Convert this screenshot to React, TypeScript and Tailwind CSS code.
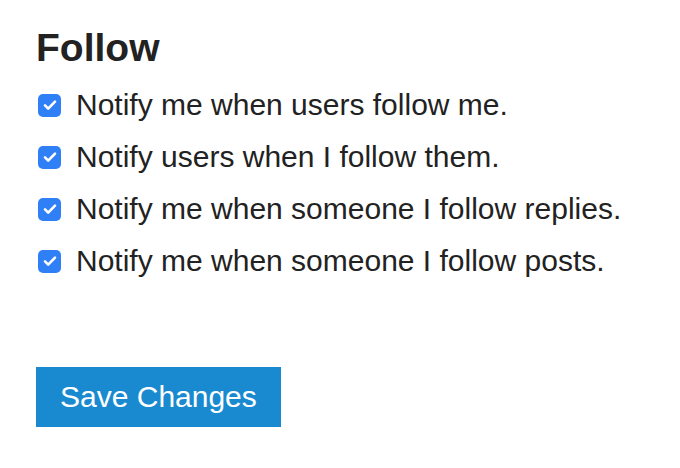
const options = [
    'Notify me when users follow me.',
    'Notify users when I follow them.',
    'Notify me when someone I follow replies.',
    'Notify me when someone I follow posts.',
];

function CheckBox() {
    return (
        <span className="w-[23px] h-[23px] rounded-[5px] bg-[#2f7ff7] flex items-center justify-center flex-shrink-0">
            <svg className="w-[16px] h-[16px]" viewBox="0 0 16 16" fill="none">
                <path d="M3 8.4l3.2 3.2L13 4.6" stroke="white" strokeWidth={2.6} strokeLinecap="round" strokeLinejoin="round" />
            </svg>
        </span>
    );
}

export default function App() {
    return (
        <div className="w-[680px] h-[468px] bg-white text-[#222] pl-[36px] pt-[28px]" style={{ fontFamily: '"Liberation Sans", Arial, sans-serif' }}>
            <h1 className="text-[39px] leading-none font-bold">Follow</h1>

            <div className="mt-[12px]">
                {options.map((label) => (
                    <label key={label} className="flex items-center h-[52px] pl-[2px]">
                        <CheckBox />
                        <span className="ml-[15px] text-[30px] leading-[52px]">{label}</span>
                    </label>
                ))}
            </div>

            <button className="mt-[80px] h-[60px] px-[24px] bg-[#1a8ad0] text-white text-[30px] leading-none flex items-center">
                Save Changes
            </button>
        </div>
    );
}
